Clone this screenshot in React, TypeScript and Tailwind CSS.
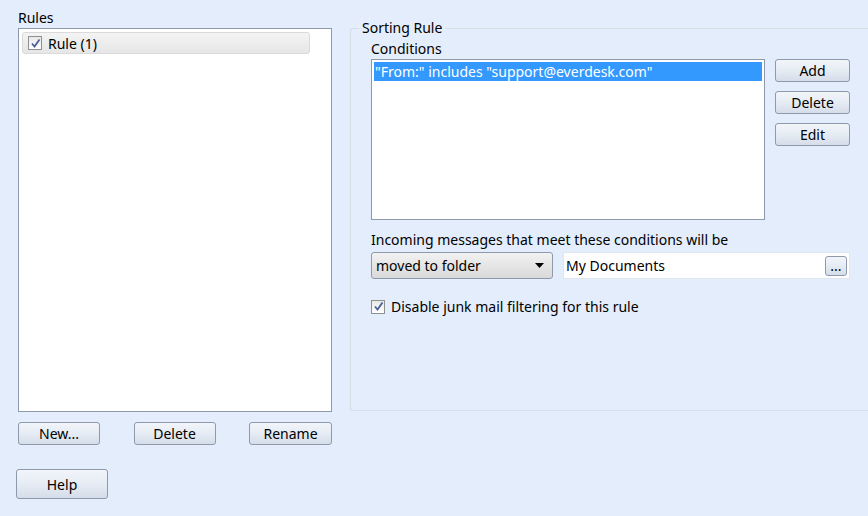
const Btn = ({ children, className = "" }: { children: React.ReactNode; className?: string }) => (
  <div className={`flex items-center justify-center rounded-[3px] border border-[#8e9aab] bg-gradient-to-b from-[#f2f5fa] via-[#e6ecf4] to-[#d5dde9] text-[14px] text-black ${className}`}>
    {children}
  </div>
);
const Check = () => (
  <div className="flex h-[14px] w-[14px] items-center justify-center border border-[#8e8f8f] bg-gradient-to-b from-[#e8e8e8] to-white">
    <svg width="11" height="11" viewBox="0 0 11 11"><path d="M2 5.5 L4.5 8.5 L9.5 1.5" stroke="#4a5f97" strokeWidth="1.8" fill="none" /></svg>
  </div>
);
export default function App() {
  return (
    <div className="relative h-[516px] w-[868px] overflow-hidden bg-[#e3edfb] text-[14px] text-black" style={{ fontFamily: '"Noto Sans", "Open Sans", sans-serif' }}>
      <div className="flex">
        <div className="ml-[18px] w-[314px] shrink-0">
          <div className="mt-[7px] h-[21px] leading-[21px]">Rules</div>
          <div className="h-[384px] border border-[#8e9aab] bg-white p-[3px]">
            <div className="flex h-[22px] w-[288px] items-center gap-[6px] rounded-[3px] border border-[#dadada] bg-gradient-to-b from-[#f4f4f4] to-[#e6e6e6] pl-[5px]">
              <Check /><span>Rule (1)</span>
            </div>
          </div>
          <div className="mt-[10px] flex justify-between">
            <Btn className="h-[23px] w-[82px]">New...</Btn>
            <Btn className="h-[23px] w-[82px]">Delete</Btn>
            <Btn className="h-[23px] w-[83px]">Rename</Btn>
          </div>
          <Btn className="ml-[-2px] mt-[24px] h-[30px] w-[92px]">Help</Btn>
        </div>
        <div className="relative ml-[18px] mt-[28px] h-[383px] flex-1 rounded-l-[3px] border border-r-0 border-[#d5dfe5] pl-[20px]">
          <div className="absolute left-[8px] top-[-10px] bg-[#e3edfb] px-[3px] leading-[18px]">Sorting Rule</div>
          <div className="mt-[10px] leading-[20px]">Conditions</div>
          <div className="flex">
            <div className="h-[161px] w-[394px] border border-[#8e9aab] bg-white p-[2px]">
              <div className="h-[19px] bg-[#3399ff] pl-[1px] leading-[19px] text-white">"From:" includes "support@everdesk.com"</div>
            </div>
            <div className="ml-[10px] flex flex-col gap-[9px]">
              <Btn className="h-[23px] w-[75px]">Add</Btn>
              <Btn className="h-[23px] w-[75px]">Delete</Btn>
              <Btn className="h-[23px] w-[75px]">Edit</Btn>
            </div>
          </div>
          <div className="mt-[10px] leading-[20px]">Incoming messages that meet these conditions will be</div>
          <div className="mt-[2px] flex items-center">
            <div className="flex h-[27px] w-[182px] items-center justify-between rounded-[3px] border border-[#8e9aab] bg-gradient-to-b from-[#f2f2f2] to-[#d9d9d9] pl-[4px] pr-[8px]">
              <span>moved to folder</span>
              <svg width="9" height="5" viewBox="0 0 9 5"><path d="M0 0h9L4.5 5z" fill="#000" /></svg>
            </div>
            <div className="ml-[10px] flex h-[27px] w-[287px] items-center justify-between border border-[#e0e6ee] bg-white pl-[2px] pr-[2px]">
              <span>My Documents</span>
              <Btn className="h-[20px] w-[22px] text-[11px] leading-none">...</Btn>
            </div>
          </div>
          <div className="mt-[17px] flex items-center gap-[6px]">
            <Check /><span>Disable junk mail filtering for this rule</span>
          </div>
        </div>
      </div>
    </div>
  );
}
